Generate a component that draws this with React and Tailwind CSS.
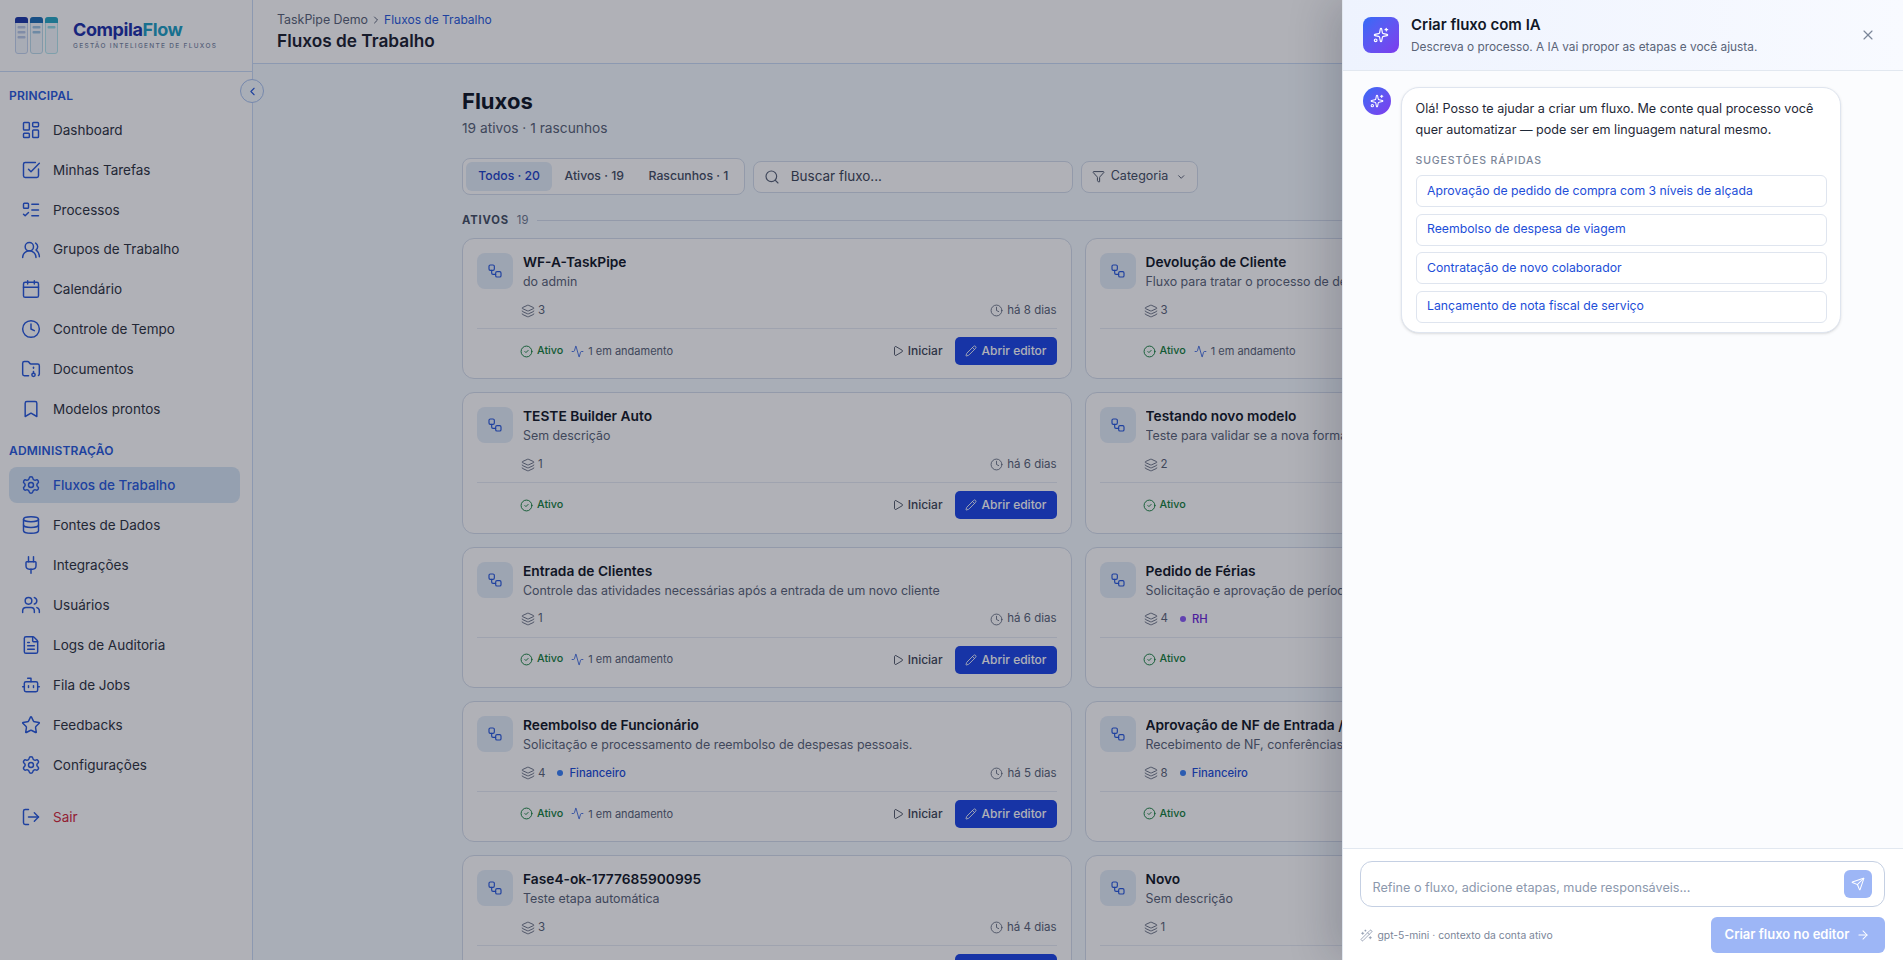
import {
  Activity, ArrowRight, Bookmark, Bot, Calendar, ChevronDown, ChevronLeft, ChevronRight, CircleCheck, Clock,
  Database, FileText, Filter, FolderArchive, Layers, LayoutDashboard, ListTodo, LogOut, Pencil, Play, Plug,
  Search, Send, Settings, Sparkles, SquareCheckBig, Star, Users, UsersRound, WandSparkles, Workflow, X,
} from "lucide-react";

const principal = [
  { icon: LayoutDashboard, label: "Dashboard" },
  { icon: SquareCheckBig, label: "Minhas Tarefas" },
  { icon: ListTodo, label: "Processos" },
  { icon: UsersRound, label: "Grupos de Trabalho" },
  { icon: Calendar, label: "Calendário" },
  { icon: Clock, label: "Controle de Tempo" },
  { icon: FolderArchive, label: "Documentos" },
  { icon: Bookmark, label: "Modelos prontos" },
];

const admin = [
  { icon: Settings, label: "Fluxos de Trabalho", active: true },
  { icon: Database, label: "Fontes de Dados" },
  { icon: Plug, label: "Integrações" },
  { icon: Users, label: "Usuários" },
  { icon: FileText, label: "Logs de Auditoria" },
  { icon: Bot, label: "Fila de Jobs" },
  { icon: Star, label: "Feedbacks" },
  { icon: Settings, label: "Configurações" },
];

const flows = [
  { title: "WF-A-TaskPipe", desc: "do admin", steps: 3, when: "há 8 dias", running: true },
  { title: "Devolução de Cliente", desc: "Fluxo para tratar o processo de devolução de clientes", steps: 3, when: "há 7 dias", running: true },
  { title: "TESTE Builder Auto", desc: "Sem descrição", steps: 1, when: "há 6 dias" },
  { title: "Testando novo modelo", desc: "Teste para validar se a nova forma de criar fluxos funciona", steps: 2, when: "há 6 dias" },
  { title: "Entrada de Clientes", desc: "Controle das atividades necessárias após a entrada de um novo cliente", steps: 1, when: "há 6 dias", running: true },
  { title: "Pedido de Férias", desc: "Solicitação e aprovação de período de férias", steps: 4, when: "há 5 dias", tag: "RH", tagColor: "violet" },
  { title: "Reembolso de Funcionário", desc: "Solicitação e processamento de reembolso de despesas pessoais.", steps: 4, when: "há 5 dias", tag: "Financeiro", tagColor: "blue", running: true },
  { title: "Aprovação de NF de Entrada / Compras", desc: "Recebimento de NF, conferências e aprovação", steps: 8, when: "há 5 dias", tag: "Financeiro", tagColor: "blue" },
  { title: "Fase4-ok-1777685900995", desc: "Teste etapa automática", steps: 3, when: "há 4 dias" },
  { title: "Novo", desc: "Sem descrição", steps: 1, when: "há 4 dias" },
];

const suggestions = [
  "Aprovação de pedido de compra com 3 níveis de alçada",
  "Reembolso de despesa de viagem",
  "Contratação de novo colaborador",
  "Lançamento de nota fiscal de serviço",
];

function Logo() {
  return (
    <div className="flex items-center gap-[14px] pl-[15px] h-[71px]">
      <svg width="44" height="38" viewBox="0 0 44 38" fill="none">
        {[0, 15, 30].map((x, i) => (
          <g key={x}>
            <rect x={x + 0.5} y="0.5" width="12" height="36" rx="2.5" fill="#f4f8fd" stroke={["#c4d4ef", "#bddcea", "#b5e6ee"][i]} />
            <path d={`M${x} 6V3a3 3 0 0 1 3-3h7a3 3 0 0 1 3 3v3z`} fill={["#1e3aa8", "#1f6fb5", "#2aa9c4"][i]} />
          </g>
        ))}
        <rect x="2.5" y="9" width="8" height="2.5" rx="1" fill="#b9c9e8" />
        <rect x="2.5" y="14" width="8" height="2.5" rx="1" fill="#b9c9e8" />
        <rect x="2.5" y="19" width="8" height="2.5" rx="1" fill="#b9c9e8" />
        <rect x="17.5" y="9" width="8" height="2.5" rx="1" fill="#9cc5e4" />
        <rect x="17.5" y="14" width="8" height="2.5" rx="1" fill="#9cc5e4" />
        <rect x="32.5" y="9" width="8" height="2.5" rx="1" fill="#93dbe6" />
      </svg>
      <div className="flex flex-col">
        <span className="text-[18px] leading-[20px] font-bold tracking-[-0.4px]">
          <span className="text-[#1f33aa]">Compila</span>
          <span className="text-[#1f9fc4]">Flow</span>
        </span>
        <span className="text-[6.5px] leading-[9px] mt-[2px] font-medium tracking-[1.3px] text-[#7a88a4]">GESTÃO INTELIGENTE DE FLUXOS</span>
      </div>
    </div>
  );
}

function NavItem({ item }) {
  const Icon = item.icon;
  return (
    <a className={`flex items-center gap-3 h-9 px-3 rounded-lg text-[13.5px] ${item.active ? "bg-[#d8e6f5] text-[#2a5bdc] font-medium" : "text-[#2f343f]"}`}>
      <Icon size={20} strokeWidth={1.75} className="text-[#2a5bdc] shrink-0" />
      {item.label}
    </a>
  );
}

function Sidebar() {
  return (
    <aside className="w-[253px] shrink-0 border-r border-[#cbdcf7] bg-white flex flex-col">
      <div className="border-b border-[#cbdcf7]">
        <Logo />
      </div>
      <nav className="pl-[9px] pr-3 pt-4 flex flex-col">
        <p className="text-[12px] leading-4 font-semibold text-[#2a5bdc] mb-2 tracking-[0.2px]">PRINCIPAL</p>
        <div className="flex flex-col gap-[3.85px]">
          {principal.map((item) => <NavItem key={item.label} item={item} />)}
        </div>
        <p className="text-[12px] leading-4 font-semibold text-[#2a5bdc] mt-4 mb-2 tracking-[0.2px]">ADMINISTRAÇÃO</p>
        <div className="flex flex-col gap-1">
          {admin.map((item) => <NavItem key={item.label + item.active} item={item} />)}
        </div>
        <a className="flex items-center gap-3 h-9 px-3 mt-4 text-[13.5px] text-[#d42a3c]">
          <LogOut size={20} strokeWidth={1.75} className="text-[#2a5bdc]" />
          Sair
        </a>
      </nav>
    </aside>
  );
}

function FlowCard({ flow }) {
  return (
    <div className="h-[141.25px] rounded-xl border border-[#d5deec] bg-white pt-[14px] pl-[14px] pr-[14px] overflow-hidden">
      <div className="flex gap-[10px]">
        <div className="w-9 h-9 rounded-lg bg-[#e4edf8] flex items-center justify-center shrink-0">
          <Workflow size={16} strokeWidth={1.75} className="text-[#2a5bdc]" />
        </div>
        <div className="min-w-0">
          <p className="text-[13.75px] leading-[19px] font-semibold text-[#141a29] truncate">{flow.title}</p>
          <p className="text-[12.4px] leading-[19px] text-[#5a6478] truncate">{flow.desc}</p>
        </div>
      </div>
      <div className="flex items-center justify-between pl-[44px] h-5 mt-[9.5px] text-[11.5px] text-[#5a6478]">
        <div className="flex items-center">
          <Layers size={14} strokeWidth={1.5} className="mr-[3px]" />
          <span>{flow.steps}</span>
          {flow.tag && (
            <span className={`flex items-center ml-[12px] text-[11.25px] font-medium ${flow.tagColor === "violet" ? "text-[#6d28d9]" : "text-[#1d4ed8]"}`}>
              <span className={`w-[6px] h-[6px] rounded-full mr-[6px] ${flow.tagColor === "violet" ? "bg-[#8b5cf6]" : "bg-[#3b82f6]"}`} />
              {flow.tag}
            </span>
          )}
        </div>
        <div className="flex items-center gap-[4px]">
          <Clock size={13} strokeWidth={1.5} />
          {flow.when}
        </div>
      </div>
      <div className="flex items-center justify-between border-t border-[#e6ebf3] mt-[7.5px] pt-[8px] pl-[43px]">
        <div className="flex items-center text-[11px]">
          <CircleCheck size={13} strokeWidth={1.75} className="text-[#15803d] mr-[4px]" />
          <span className="text-[10.75px] font-medium text-[#15803d]">Ativo</span>
          {flow.running && (
            <span className="flex items-center ml-[8px] text-[#5a6478]">
              <Activity size={13} strokeWidth={1.5} className="text-[#2a5bdc] mr-[4px]" />
              1 em andamento
            </span>
          )}
        </div>
        <div className="flex items-center gap-3">
          <span className="flex items-center gap-[4px] text-[12px] font-medium text-[#3f4859]">
            <Play size={12} strokeWidth={1.75} />
            Iniciar
          </span>
          <span className="flex items-center gap-[5px] h-7 px-[10px] rounded-[5px] bg-[#1e48e6] text-white text-[12px] font-medium">
            <Pencil size={12} strokeWidth={1.75} />
            Abrir editor
          </span>
        </div>
      </div>
    </div>
  );
}

function Content() {
  return (
    <main className="flex-1 min-w-0 flex flex-col bg-[#f5fbff]">
      <header className="h-16 shrink-0 bg-white border-b border-[#cbdcf7] px-6 flex flex-col justify-center">
        <div className="flex items-center text-[12px] leading-[18px] text-[#5a6478]">
          <span className="text-[12.4px]">TaskPipe Demo</span>
          <ChevronRight size={12} className="mx-[2px]" />
          <span className="text-[#2a5bdc]">Fluxos de Trabalho</span>
        </div>
        <h1 className="text-[17.25px] leading-[23px] font-semibold text-[#1c2230]">Fluxos de Trabalho</h1>
      </header>
      <div className="flex-1 overflow-hidden">
        <div className="max-w-[1232px] mx-auto pt-[21px]">
          <h2 className="text-[22px] leading-8 font-bold text-[#111827]">Fluxos</h2>
          <p className="text-[13.75px] leading-5 mt-[1px] text-[#5a6478]">19 ativos · 1 rascunhos</p>
          <div className="flex items-center gap-2 mt-5">
            <div className="flex p-[3px] h-[37px] bg-white border border-[#d5deec] rounded-lg text-[12.25px] font-medium text-[#465065]">
              <span className="flex items-center px-[12.25px] rounded-md bg-[#e4edf8] text-[#1f45c8]">Todos · 20</span>
              <span className="flex items-center px-[12.25px]">Ativos · 19</span>
              <span className="flex items-center px-[12.25px]">Rascunhos · 1</span>
            </div>
            <div className="flex items-center gap-[11px] w-[320px] h-8 px-[10px] bg-white border border-[#d5deec] rounded-lg text-[13.5px] text-[#3f4859]">
              <Search size={16} strokeWidth={1.75} className="text-[#5a6478]" />
              Buscar fluxo...
            </div>
            <div className="flex items-center h-8 w-[117px] px-[10px] bg-white border border-[#d5deec] rounded-lg text-[12.5px] text-[#465065]">
              <Filter size={15} strokeWidth={1.75} className="mr-[6px]" />
              Categoria
              <ChevronDown size={12} className="ml-[8px]" />
            </div>
          </div>
          <div className="flex items-center mt-[17px] h-4">
            <span className="text-[11.25px] font-bold tracking-[0.8px] text-[#465065]">ATIVOS</span>
            <span className="text-[11.25px] text-[#6f7a8f] ml-[8px]">19</span>
            <span className="flex-1 h-px bg-[#d5deec] ml-[9px]" />
          </div>
          <div className="grid grid-cols-2 gap-[13px] mt-[10px]">
            {flows.map((flow) => <FlowCard key={flow.title} flow={flow} />)}
          </div>
        </div>
      </div>
    </main>
  );
}

function AiPanel() {
  return (
    <aside className="absolute top-0 right-0 bottom-0 w-[561px] bg-white border-l border-[#e2e8f0] shadow-[-12px_0_40px_rgba(15,23,42,0.18)] flex flex-col">
      <div className="h-[71px] shrink-0 border-b border-[#e2e8f0] bg-gradient-to-r from-[#eef3fe] to-[#f8faff] flex items-center pl-[20px] pr-[27px]">
        <div className="w-9 h-9 rounded-lg bg-gradient-to-br from-[#2f6bf6] to-[#7c3aed] flex items-center justify-center">
          <Sparkles size={16} strokeWidth={1.75} className="text-white" />
        </div>
        <div className="ml-3 flex-1">
          <p className="text-[15px] leading-[22px] font-semibold text-[#111827]">Criar fluxo com IA</p>
          <p className="text-[11.85px] leading-[18px] mt-[2px] text-[#5a6478]">Descreva o processo. A IA vai propor as etapas e você ajusta.</p>
        </div>
        <X size={16} strokeWidth={1.75} className="text-[#7b8699]" />
      </div>
      <div className="flex-1 bg-[#fbfcfe] pt-4 pl-[20px] flex gap-[10px]">
        <div className="w-7 h-7 rounded-full bg-gradient-to-br from-[#2f6bf6] to-[#7c3aed] flex items-center justify-center shrink-0">
          <Sparkles size={14} strokeWidth={1.75} className="text-white" />
        </div>
        <div className="w-[440px] h-[246px] bg-white border border-[#dfe5ef] rounded-[18px] shadow-sm px-[13.5px] pt-[10px]">
          <p className="text-[12.6px] leading-[21px] text-[#1f2937]">Olá! Posso te ajudar a criar um fluxo. Me conte qual processo você quer automatizar — pode ser em linguagem natural mesmo.</p>
          <p className="text-[10.5px] leading-4 mt-[13px] mb-[6px] font-medium tracking-[0.9px] text-[#7b8699]">SUGESTÕES RÁPIDAS</p>
          <div className="flex flex-col gap-[6.5px]">
            {suggestions.map((s) => (
              <button key={s} className="h-8 px-[10.5px] text-left text-[12.25px] text-[#1d4ed8] bg-white border border-[#dfe5ef] rounded-md truncate">{s}</button>
            ))}
          </div>
        </div>
      </div>
      <div className="shrink-0 h-[112px] border-t border-[#e2e8f0] bg-white pl-[16.5px] pr-[18.5px] pt-3">
        <div className="h-[46px] border border-[#c5d0e3] rounded-xl flex items-center pl-3 pr-3">
          <span className="flex-1 text-[12.65px] text-[#8c98ad] pt-[9px]">Refine o fluxo, adicione etapas, mude responsáveis...</span>
          <span className="w-7 h-7 rounded-md bg-[#9db6f6] flex items-center justify-center">
            <Send size={14} strokeWidth={1.75} className="text-white" />
          </span>
        </div>
        <div className="flex items-center mt-[10px]">
          <WandSparkles size={13} strokeWidth={1.5} className="text-[#8c98ad] mr-[5px]" />
          <span className="flex-1 text-[10.35px] text-[#7b8699] pt-[1px]">gpt-5-mini · contexto da conta ativo</span>
          <span className="flex items-center justify-center gap-[7px] w-[174px] h-9 rounded-md bg-[#9db6f6] text-white text-[13px] font-semibold">
            Criar fluxo no editor
            <ArrowRight size={14} strokeWidth={1.75} />
          </span>
        </div>
      </div>
    </aside>
  );
}

export default function App() {
  return (
    <div className="relative flex h-screen overflow-hidden font-['Inter',sans-serif]">
      <Sidebar />
      <button className="absolute left-[240px] top-[79px] w-6 h-6 rounded-full bg-[#f5fbff] border border-[#a9c3f0] flex items-center justify-center">
        <ChevronLeft size={13} className="text-[#2a5bdc]" />
      </button>
      <Content />
      <div className="absolute inset-0 bg-[#080b1e]/32" />
      <AiPanel />
    </div>
  );
}
